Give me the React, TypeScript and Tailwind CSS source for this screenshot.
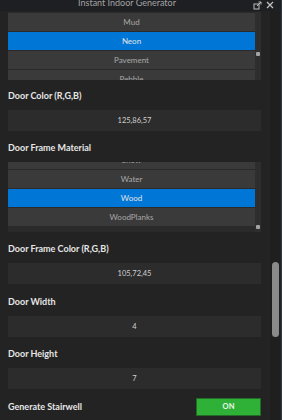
import React from "react";

const font = { fontFamily: "Lato, 'Noto Sans', sans-serif" };

function Label({ text, className = "" }: { text: string; className?: string }) {
  return (
    <div className={`h-[12px] flex items-center text-[9px] font-bold text-[#e6e6e6] leading-none ${className}`}>
      {text}
    </div>
  );
}

function Field({ value, className = "" }: { value: string; className?: string }) {
  return (
    <div className={`h-[21px] bg-[#2c2c2c] flex items-center justify-center text-[7.5px] text-[#d0d0d0] ${className}`}>
      {value}
    </div>
  );
}

function MaterialList({
  items,
  selected,
  offset,
  dotTop,
  height,
  className = "",
}: {
  items: string[];
  selected: string;
  offset: string;
  dotTop: string;
  height: string;
  className?: string;
}) {
  return (
    <div className={`${height} bg-[#2a2a2a] flex overflow-hidden ${className}`}>
      <div className="flex-1 overflow-hidden">
        <div className={`flex flex-col gap-[1px] ${offset}`}>
          {items.map((item) => (
            <div
              key={item}
              className={`h-[18px] shrink-0 flex items-center justify-center text-[8px] ${
                item === selected ? "bg-[#0077d7] text-[#e4e4e4]" : "bg-[#3a3a3a] text-[#a9a9a9]"
              }`}
            >
              {item}
            </div>
          ))}
        </div>
      </div>
      <div className="w-[6px] bg-[#2e2e2e] flex flex-col items-center">
        <div className={`w-[4px] h-[4px] rounded-[1px] bg-[#a3a3a3] ${dotTop}`} />
      </div>
    </div>
  );
}

export default function App() {
  return (
    <div
      style={font}
      className="w-[282px] h-[420px] bg-[#232323] flex flex-col overflow-hidden border-r border-[#2f3846]"
    >
      {/* title bar, scrolled partly out of view */}
      <div className="h-[11px] shrink-0 bg-[#1e1f22] flex items-start overflow-hidden relative">
        <div className="w-[254px] text-center text-[9px] leading-[9px] text-[#a3a3a3] -mt-[2px]">
          Instant Indoor Generator
        </div>
        <svg className="absolute left-[253px] top-[1px]" width="9" height="9" viewBox="0 0 9 9">
          <rect x="1" y="3" width="5" height="5" fill="none" stroke="#bdbdbd" strokeWidth="1" />
          <path d="M4 5 L8 1 M5.5 1 H8 V3.5" fill="none" stroke="#bdbdbd" strokeWidth="1" />
        </svg>
        <svg className="absolute left-[266px] top-[1px]" width="8" height="8" viewBox="0 0 8 8">
          <path d="M1 1 L7 7 M7 1 L1 7" stroke="#c4c4c4" strokeWidth="1.2" />
        </svg>
      </div>

      <div className="flex-1 flex">
        {/* settings column */}
        <div className="w-[261px] pl-[8px] flex flex-col">
          <MaterialList
            items={["Mud", "Neon", "Pavement", "Pebble"]}
            selected="Neon"
            offset="mt-[1px]"
            dotTop="mt-[40px]"
            height="h-[68px]"
            className="mt-[1px]"
          />

          <Label text="Door Color (R,G,B)" className="mt-[9px]" />
          <Field value="125,86,57" className="mt-[9px]" />

          <Label text="Door Frame Material" className="mt-[10px]" />
          <MaterialList
            items={["Snow", "Water", "Wood", "WoodPlanks"]}
            selected="Wood"
            offset="-mt-[11px]"
            dotTop="mt-[63px]"
            height="h-[70px]"
            className="mt-[9px]"
          />

          <Label text="Door Frame Color (R,G,B)" className="mt-[10px]" />
          <Field value="105,72,45" className="mt-[9px] h-[20px]" />

          <Label text="Door Width" className="mt-[11px]" />
          <Field value="4" className="mt-[9px]" />

          <Label text="Door Height" className="mt-[10px]" />
          <Field value="7" className="mt-[9px]" />

          <div className="mt-[9px] h-[18px] flex items-center justify-between">
            <span className="text-[9px] font-bold text-[#e6e6e6]">Generate Stairwell</span>
            <div className="w-[65px] h-[18px] bg-[#2fb138] border border-[#236b28] flex items-center justify-center text-[7.5px] font-bold text-[#eaf7ea] tracking-wide">
              ON
            </div>
          </div>
        </div>

        {/* main scrollbar */}
        <div className="ml-[9px] w-[10px] bg-[#1f1f1f] flex justify-center">
          <div className="mt-[251px] w-[7px] h-[75px] rounded-full bg-[#8a8a8a]" />
        </div>
      </div>
    </div>
  );
}
